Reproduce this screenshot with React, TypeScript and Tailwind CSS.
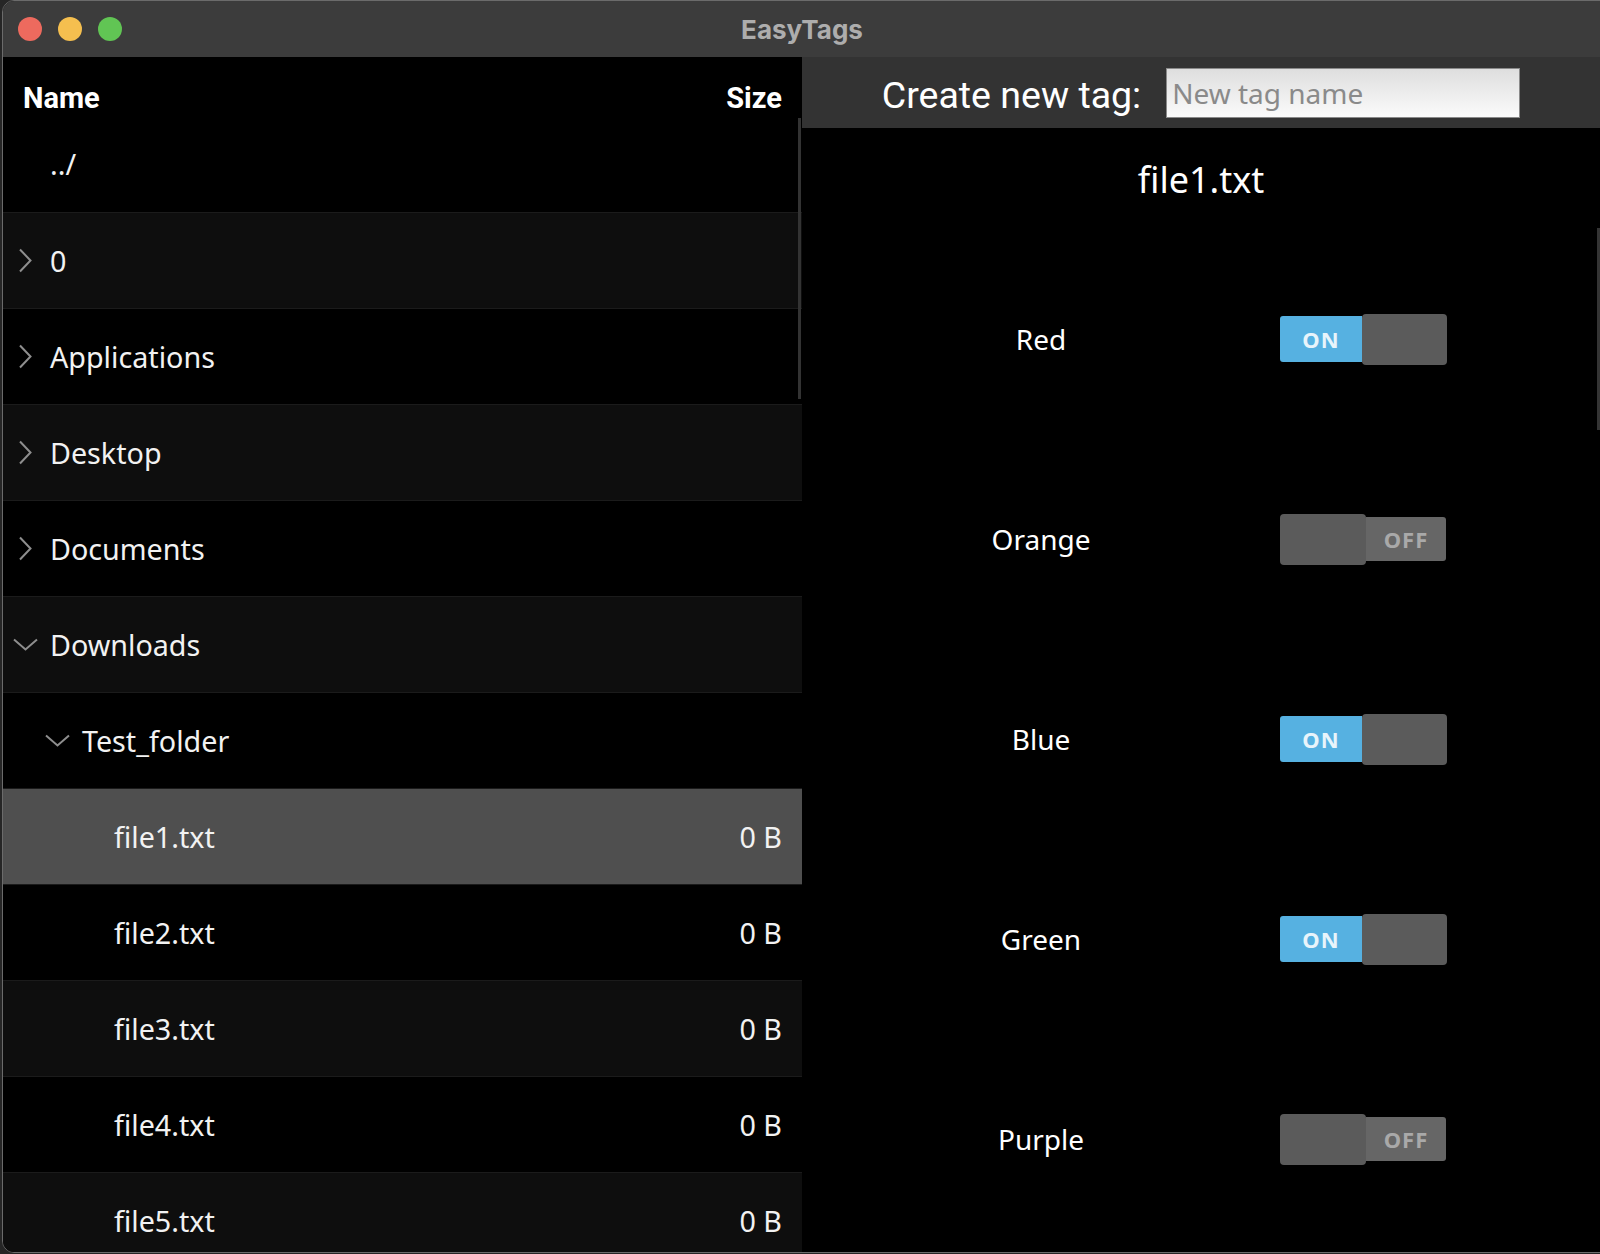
import React from "react";

type Kind = "up" | "closed" | "open" | "file";

const ROWS: { name: string; depth: number; kind: Kind; size?: string }[] = [
  { name: "../", depth: 0, kind: "up" },
  { name: "0", depth: 0, kind: "closed" },
  { name: "Applications", depth: 0, kind: "closed" },
  { name: "Desktop", depth: 0, kind: "closed" },
  { name: "Documents", depth: 0, kind: "closed" },
  { name: "Downloads", depth: 0, kind: "open" },
  { name: "Test_folder", depth: 1, kind: "open" },
  { name: "file1.txt", depth: 2, kind: "file", size: "0 B" },
  { name: "file2.txt", depth: 2, kind: "file", size: "0 B" },
  { name: "file3.txt", depth: 2, kind: "file", size: "0 B" },
  { name: "file4.txt", depth: 2, kind: "file", size: "0 B" },
  { name: "file5.txt", depth: 2, kind: "file", size: "0 B" },
];

const TAGS = [
  { name: "Red", on: true },
  { name: "Orange", on: false },
  { name: "Blue", on: true },
  { name: "Green", on: true },
  { name: "Purple", on: false },
];

const INDENT = ["pl-[9px]", "pl-[41px]", "pl-[73px]"];

function Chevron({ kind }: { kind: Kind }) {
  if (kind === "closed") {
    return (
      <svg width="14" height="25" viewBox="0 0 14 25" fill="none">
        <path d="M2 1.5 L12.5 12.5 L2 23.5" stroke="#8e8e8e" strokeWidth="2" />
      </svg>
    );
  }
  if (kind === "open") {
    return (
      <svg width="25" height="13" viewBox="0 0 25 13" fill="none">
        <path d="M1 1.5 L12.5 11.5 L24 1.5" stroke="#8e8e8e" strokeWidth="2" />
      </svg>
    );
  }
  return null;
}

function Toggle({ on }: { on: boolean }) {
  if (on) {
    return (
      <div className="flex items-center">
        <div className="flex h-[46px] w-[82px] items-center justify-center rounded-l-[3px] bg-[#56b1e1] font-['Noto_Sans',sans-serif] text-[22px] font-bold tracking-[1px] text-[#e8f4fb]">
          ON
        </div>
        <div className="h-[51px] w-[85px] rounded-[4px] bg-[#5b5b5b]" />
      </div>
    );
  }
  return (
    <div className="flex items-center">
      <div className="h-[51px] w-[86px] rounded-[4px] bg-[#5b5b5b]" />
      <div className="flex h-[44px] w-[80px] items-center justify-center rounded-r-[3px] bg-[#666666] font-['Noto_Sans',sans-serif] text-[22px] font-bold tracking-[1px] text-[#a9a9a9]">
        OFF
      </div>
    </div>
  );
}

export default function App() {
  return (
    <div className="h-[1254px] w-[1600px] overflow-hidden bg-[#262626]">
      <div className="ml-[2px] flex h-[1253px] w-[1610px] flex-col overflow-hidden rounded-[12px] border border-[#6b6b6b] bg-black">
        {/* title bar */}
        <div className="relative flex h-[56px] shrink-0 items-center bg-[#3c3c3c]">
          <div className="flex gap-[16px] pl-[15px]">
            <span className="h-[24px] w-[24px] rounded-full bg-[#ed6a5e]" />
            <span className="h-[24px] w-[24px] rounded-full bg-[#f5bf4f]" />
            <span className="h-[24px] w-[24px] rounded-full bg-[#61c554]" />
          </div>
          <div className="absolute left-0 top-0 flex h-full w-[1598px] items-center justify-center font-['Inter',sans-serif] text-[26px] font-bold text-[#adadad]">
            EasyTags
          </div>
        </div>

        <div className="flex min-h-0 flex-1">
          {/* file browser */}
          <div className="relative w-[799px] shrink-0 text-[#f2f2f2]">
            <div className="flex h-[59px] items-start justify-between pl-[20px] pr-[20px] pt-[27px] font-['Roboto',sans-serif] text-[29px] font-bold leading-none text-white">
              <span>Name</span>
              <span>Size</span>
            </div>
            {ROWS.map((r, i) => {
              const selected = i === 7;
              const bg = selected ? "bg-[#4f4f4f]" : i % 2 === 1 ? "bg-[#0e0e0e]" : "bg-black";
              return (
                <div
                  key={r.name}
                  className={`flex h-[96px] items-center border-t border-[#1b1b1b] pr-[20px] font-['Noto_Sans',sans-serif] text-[28.7px] ${bg} ${INDENT[r.depth]} ${i === 0 ? "border-t-0" : ""}`}
                >
                  <div className="flex w-[26px] shrink-0 items-center justify-center">
                    <Chevron kind={r.kind} />
                  </div>
                  <span className="ml-[12px] flex-1">{r.name}</span>
                  {r.size && <span>{r.size}</span>}
                </div>
              );
            })}
            <div className="absolute right-[1px] top-[61px] h-[281px] w-[3px] bg-[#333333]" />
          </div>

          {/* tag panel */}
          <div className="relative flex w-[798px] shrink-0 flex-col">
            <div className="flex h-[71px] items-center justify-center gap-[25px] bg-[#333333]">
              <span className="pt-[6px] font-['Roboto',sans-serif] text-[37.5px] text-white">Create new tag:</span>
              <div className="flex h-[50px] w-[354px] items-center border border-[#8a8a8a] bg-gradient-to-b from-[#dedede] to-[#fbfbfb] pl-[5px] font-['Noto_Sans',sans-serif] text-[28px] text-[#8a8a8a]">
                New tag name
              </div>
            </div>
            <div className="flex h-[111px] items-center justify-center pb-[8px] font-['Noto_Sans',sans-serif] text-[36px] text-white">
              file1.txt
            </div>
            {TAGS.map((t) => (
              <div key={t.name} className="flex h-[200px] items-center">
                <div className="w-[478px] text-center font-['Noto_Sans',sans-serif] text-[28px] text-white">
                  {t.name}
                </div>
                <Toggle on={t.on} />
              </div>
            ))}
            <div className="absolute right-[0px] top-[171px] h-[202px] w-[3px] bg-[#343434]" />
          </div>
        </div>
      </div>
    </div>
  );
}
